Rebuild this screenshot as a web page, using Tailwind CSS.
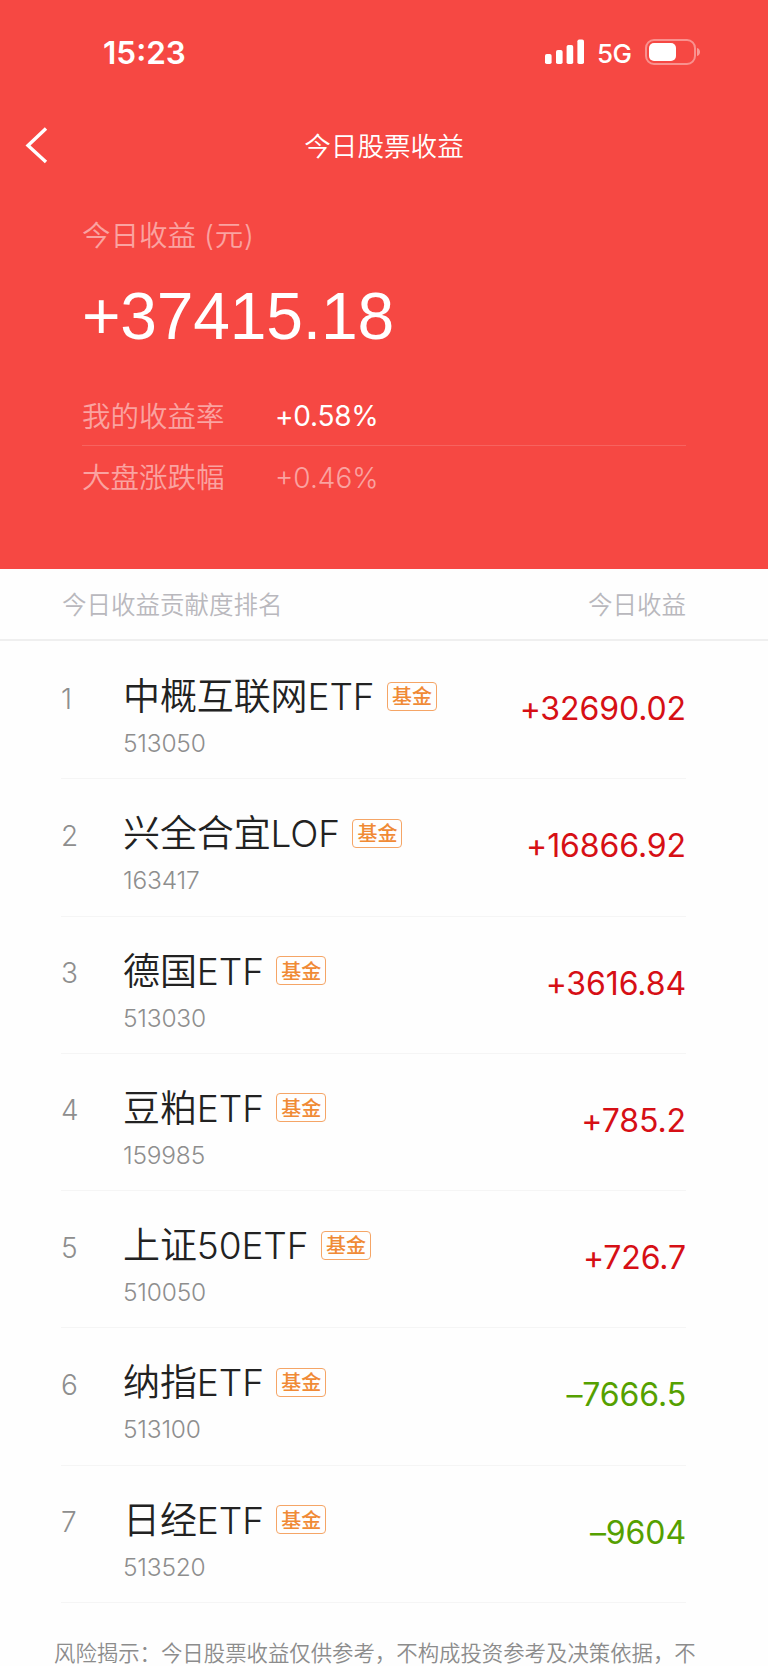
<!DOCTYPE html>
<html lang="zh-CN">
<head>
<meta charset="utf-8">
<title>今日股票收益</title>
<script src="https://cdn.jsdelivr.net/npm/@tailwindcss/browser@4"></script>
</head>
<body class="bg-white">
<div class="flex h-[1666px] w-[768px] flex-col overflow-hidden bg-[#fefefe] font-['Inter','Noto_Sans_CJK_SC',sans-serif] font-[350] whitespace-nowrap">
  <header class="flex h-[569px] shrink-0 flex-col bg-[#f64843] text-white">
    <div class="flex h-[104px] shrink-0 items-center justify-between pl-[103px] pr-[67px]">
      <div class="pt-[2px] text-[31.5px] leading-none font-semibold">15:23</div>
      <div class="flex items-center">
        <svg class="h-[26px] w-[40px]" viewBox="0 0 40 26" fill="currentColor"><rect x="0" y="15" width="6.6" height="10" rx="1.8"/><rect x="11" y="11" width="6.6" height="14" rx="1.8"/><rect x="21.6" y="6" width="6.6" height="19" rx="1.8"/><rect x="32.4" y="0.4" width="6.6" height="24.6" rx="1.8"/></svg>
        <span class="ml-[12px] w-[36px] pt-[3px] text-[26px] leading-none font-medium tracking-[-0.5px]">5G</span>
        <svg class="ml-[12px] h-[26px] w-[56px]" viewBox="0 0 56 26" fill="none"><rect x="1" y="1" width="49" height="24" rx="8" stroke="#fff" stroke-opacity=".4" stroke-width="2"/><rect x="4" y="4" width="27" height="18" rx="5" fill="#fff"/><path d="M52 9c4 1 4 7 0 8z" fill="#fff" fill-opacity=".45"/></svg>
      </div>
    </div>
    <div class="grid h-[84px] shrink-0 grid-cols-[100px_1fr_100px] items-center">
      <svg class="-mt-[2px] ml-[25px] h-[38px] w-[24px]" viewBox="0 0 24 38" fill="none" stroke="#fff" stroke-width="3.4"><path d="M21 2.5 3 19.5 21 36"/></svg>
      <h1 class="text-center text-[26.6px] leading-none">今日股票收益</h1>
    </div>
    <div class="flex flex-col px-[82px]">
      <div class="flex h-[94px] items-center pt-[2px] text-[28.5px] text-white/50">今日收益 <span class="ml-[8px] tracking-[0.8px]">(元)</span></div>
      <div class="flex h-[68px] items-center font-['Liberation_Sans'] text-[66px] leading-none font-normal tracking-[-0.2px]">+37415.18</div>
      <div class="mt-[36px] flex h-[60px] items-center border-b border-white/15 pt-[3px] text-[28.5px]"><span class="w-[193px] text-white/50">我的收益率</span><span class="-mt-[2px] text-[28px] font-normal tracking-[-0.25px]">+0.58%</span></div>
      <div class="flex h-[62px] items-center pt-[3px] text-[28.5px] text-white/50"><span class="w-[193px]">大盘涨跌幅</span><span class="-mt-[2px] text-[28px]">+0.46%</span></div>
    </div>
  </header>
  <div class="flex h-[72px] shrink-0 items-center justify-between border-b-2 border-[#efefef] pt-[3px] pr-[82px] pl-[62px] text-[24.5px] text-[#b9b8bd]"><span>今日收益贡献度排名</span><span>今日收益</span></div>
  <main id="list" class="flex flex-col pt-px pr-[82px] pl-[61px]"></main>
  <footer class="flex h-[100px] shrink-0 items-center pt-px pl-[54px] text-[21.4px] text-[#8c8c8c]">风险揭示：今日股票收益仅供参考，不构成投资参考及决策依据，不</footer>
</div>
<script>
const rows = [
  ['中概互联网ETF', '513050', '+32690.02'],
  ['兴全合宜LOF', '163417', '+16866.92'],
  ['德国ETF', '513030', '+3616.84'],
  ['豆粕ETF', '159985', '+785.2'],
  ['上证50ETF', '510050', '+726.7'],
  ['纳指ETF', '513100', '–7666.5'],
  ['日经ETF', '513520', '–9604'],
];
document.getElementById('list').innerHTML = rows.map(([name, code, value], i) => `
  <div class="flex h-[137.25px] shrink-0 border-b border-[#f5f5f5]">
    <div class="w-[62px] pt-[42.5px] text-[28px] leading-[28px] text-[#8e8e8e]">${i + 1}</div>
    <div class="flex flex-1 flex-col">
      <div class="mt-[36px] flex h-[38px] items-center">
        <span class="text-[37px] leading-[38px] tracking-[-0.1px] text-[#222]">${name}</span>
        <span class="-mt-[2px] ml-[12.5px] flex h-[29px] w-[50px] items-center justify-center rounded-[4px] border border-[#f5a566] pt-[2px] text-[20px] leading-none font-medium text-[#f08a35]">基金</span>
      </div>
      <div class="mt-[14px] text-[24.5px] leading-[26px] tracking-[-0.2px] text-[#8e8e8e]">${code}</div>
    </div>
    <div class="pt-[50px] text-[32px] leading-[34px] font-normal tracking-[-0.1px] ${value[0] === '+' ? 'text-[#d60f15]' : 'text-[#55a000]'}">${value}</div>
  </div>`).join('');
</script>
</body>
</html>
